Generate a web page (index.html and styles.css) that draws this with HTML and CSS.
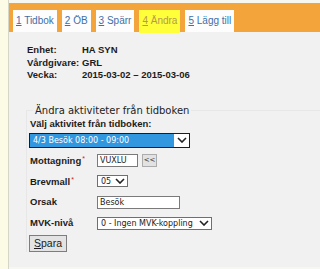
FILE: index.html
```html
<!DOCTYPE html>
<html lang="sv">
<head>
<meta charset="utf-8">
<title>Ändra</title>
<link rel="stylesheet" href="styles.css">
</head>
<body>
<div class="page">
  <div class="strip"></div>
  <div class="main">
    <div class="tabbar">
      <a class="tab"><u>1</u> Tidbok</a>
      <a class="tab"><u>2</u> ÖB</a>
      <a class="tab"><u>3</u> Spärr</a>
      <a class="tab active"><u>4</u> Ändra</a>
      <a class="tab"><u>5</u> Lägg till</a>
    </div>
    <div class="panel">
      <div class="info">
        <span class="k">Enhet:</span><span class="v">HA SYN</span>
        <span class="k">Vårdgivare:</span><span class="v">GRL</span>
        <span class="k">Vecka:</span><span class="v">2015-03-02 – 2015-03-06</span>
      </div>
      <fieldset class="box">
        <legend class="legend">Ändra aktiviteter från tidboken</legend>
        <div class="lbl">Välj aktivitet från tidboken:</div>
        <div class="select big">
          <span class="val">4/3 Besök 08:00 - 09:00</span>
          <span class="arrow"><svg width="10" height="6" viewBox="0 0 10 6"><path d="M1 1 L5 5 L9 1" fill="none" stroke="#222" stroke-width="1.6"/></svg></span>
        </div>
        <div class="form">
          <span class="lbl">Mottagning<span class="req">*</span></span>
          <span class="ctl"><span class="input w-mott">VUXLU</span><span class="btn-small">&lt;&lt;</span></span>
          <span class="lbl">Brevmall<span class="req">*</span></span>
          <span class="ctl"><span class="select w-brev"><span class="val">05</span><span class="arrow"><svg width="10" height="6" viewBox="0 0 10 6"><path d="M1 1 L5 5 L9 1" fill="none" stroke="#222" stroke-width="1.6"/></svg></span></span></span>
          <span class="lbl">Orsak</span>
          <span class="ctl"><span class="input w-orsak">Besök</span></span>
          <span class="lbl">MVK-nivå</span>
          <span class="ctl"><span class="select w-mvk"><span class="val">0 - Ingen MVK-koppling</span><span class="arrow"><svg width="10" height="6" viewBox="0 0 10 6"><path d="M1 1 L5 5 L9 1" fill="none" stroke="#222" stroke-width="1.6"/></svg></span></span></span>
        </div>
        <button class="spara"><u>S</u>para</button>
      </fieldset>
    </div>
  </div>
</div>
</body>
</html>
```

FILE: styles.css
```css
html, body {
  margin: 0;
  padding: 0;
}
body {
  height: 269px;
  overflow: hidden;
  background: #fbfbe8;
  font-family: "Liberation Sans", Arial, sans-serif;
  color: #1a1a1a;
}
.page {
  display: flex;
  height: 269px;
}
.strip {
  width: 8px;
  flex: none;
  background: #fbfbe6;
  border-right: 1px solid #d6d6c8;
}
.main {
  flex: 1;
  min-width: 0;
  background: #f7f7f2;
  padding-top: 3px;
}
.tabbar {
  height: 29px;
  box-sizing: border-box;
  background: #f3a53c;
  padding: 7px 0 0 4px;
  display: flex;
  gap: 5px;
  white-space: nowrap;
}
.tab {
  height: 22px;
  line-height: 22px;
  padding: 0 3px;
  background: #fdfdfd;
  color: #3d6fa8;
  font-size: 10px;
  text-decoration: none;
}
.tab u {
  text-decoration: underline;
}
.tab.active {
  background: #ffff3a;
  color: #b39b4c;
  height: 23px;
}
.panel {
  background: #f1f1f1;
  height: 235px;
  box-sizing: border-box;
  padding: 12px 0 0 18px;
}
.info {
  display: grid;
  grid-template-columns: 55px auto;
  font-size: 9.5px;
  font-weight: bold;
  line-height: 12.5px;
  color: #1c1c1c;
}
.box {
  margin: 23px 0 0 -1px;
  padding: 1px 0 0 2px;
  border: 1px solid #e7e7e7;
  border-right: none;
  border-bottom: none;
  min-width: 0;
}
.legend {
  margin-left: 4px;
  padding: 0 2px;
  font-family: "DejaVu Sans", Verdana, sans-serif;
  font-size: 10px;
  line-height: 12px;
  color: #222;
}
.lbl {
  display: block;
  font-size: 9.5px;
  font-weight: bold;
  line-height: 12px;
  padding-left: 1px;
  color: #1c1c1c;
}
.req {
  color: #d02020;
  font-weight: normal;
  font-size: 7px;
  vertical-align: 3px;
  margin-left: 1px;
}
.select {
  display: flex;
  box-sizing: border-box;
  border: 1px solid #6f6f6f;
  background: #fff;
  font-family: "DejaVu Sans", Verdana, sans-serif;
  font-size: 8px;
  color: #222;
  align-items: stretch;
}
.select .val {
  flex: 1;
  padding-left: 3px;
  display: flex;
  align-items: center;
  white-space: nowrap;
  overflow: hidden;
}
.select .arrow {
  width: 15px;
  flex: none;
  display: flex;
  align-items: center;
  justify-content: center;
  background: #fff;
}
.select.big {
  width: 161px;
  height: 15px;
  margin-top: 3px;
  border-color: #1d1d1d;
}
.select.big .val {
  background: #3197df;
  color: #fff;
}
.form {
  display: grid;
  grid-template-columns: 68px auto;
  grid-auto-rows: 21px;
  align-items: center;
  margin-top: 2px;
}
.ctl {
  display: flex;
  align-items: center;
  gap: 4px;
}
.input {
  box-sizing: border-box;
  height: 13px;
  border: 1px solid #7a7a7a;
  background: #fff;
  font-family: "DejaVu Sans", Verdana, sans-serif;
  font-size: 8px;
  line-height: 11px;
  padding-left: 2px;
  color: #222;
}
.w-mott { width: 41px; }
.w-orsak { width: 83px; }
.w-brev { width: 31px; height: 12px; }
.w-brev .arrow { width: 14px; }
.w-mvk { width: 115px; height: 13px; }
.btn-small {
  box-sizing: border-box;
  width: 15px;
  height: 13px;
  border: 1px solid #acacac;
  background: #e2e2e2;
  font-family: "DejaVu Sans", Verdana, sans-serif;
  font-size: 7px;
  line-height: 11px;
  text-align: center;
  color: #333;
}
.spara {
  display: block;
  box-sizing: border-box;
  width: 38px;
  height: 17px;
  margin-top: 1px;
  padding: 0;
  border: 1px solid #7d7d7d;
  background: #e3e3e3;
  font-family: "Liberation Sans", Arial, sans-serif;
  font-size: 10.5px;
  color: #1a1a1a;
}
```
